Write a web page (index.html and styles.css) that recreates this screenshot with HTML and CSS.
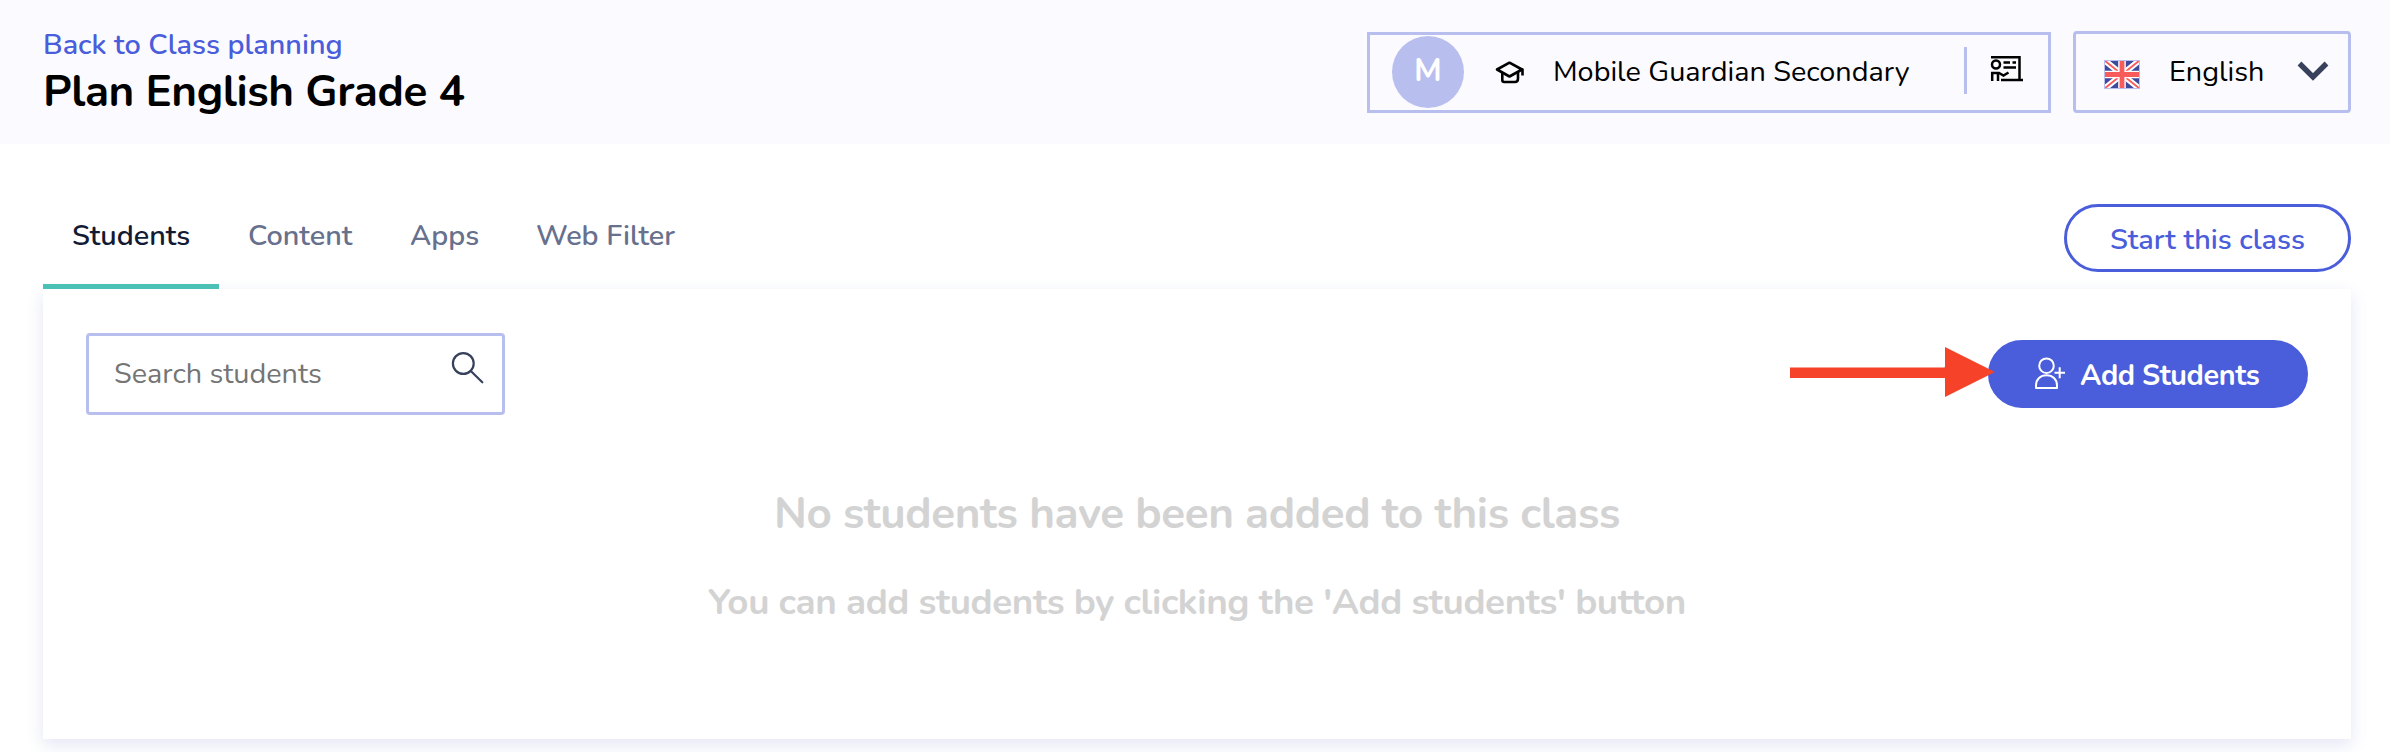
FILE: index.html
```
<!DOCTYPE html>
<html lang="en">
<head>
  <meta charset="UTF-8" />
  <meta name="viewport" content="width=device-width, initial-scale=1.0"/>
  <title>Plan English Grade 4</title>
  <link rel="stylesheet" href="styles.css">
</head>
<body>
  <header class="header">
    <div class="heading">
      <a class="back" href="#">Back to Class planning</a>
      <h1>Plan English Grade 4</h1>
    </div>

    <div class="school">
      <span class="avatar">M</span>
      <svg class="icon-cap" viewBox="0 0 30 24" fill="none" stroke="#000" stroke-width="2.6" stroke-linejoin="round">
        <path d="M2 9.5 L14.5 2.7 L27 9.5 L14.5 16.5 Z"/>
        <path d="M7.3 12.5 V20 Q7.3 22 9.3 22 H20 Q23 22 23 18.5 V12"/>
        <path d="M24 9.5 H27.5 V15.5"/>
      </svg>
      <span class="school-name">Mobile Guardian Secondary</span>
      <span class="divider"></span>
      <svg class="icon-teacher" viewBox="0 0 34 28" fill="none" stroke="#000" stroke-width="2.5">
        <path d="M1 2.3 H29.5 V25"/>
        <path d="M11 25 H33"/>
        <circle cx="6" cy="9.5" r="4"/>
        <path d="M2.2 26 V18 H9 L13.5 20.5 L18.5 17.5"/>
        <path d="M8 18 V26"/>
        <path d="M13.5 7.5 H20 M22.5 7.5 H26 M13.5 12.5 H26"/>
      </svg>
    </div>

    <div class="language">
      <svg class="flag" viewBox="0 0 36 29">
        <rect width="36" height="29" fill="#3e4a9b"/>
        <path d="M0 0 L36 29 M36 0 L0 29" stroke="#fff" stroke-width="6"/>
        <path d="M0 0 L36 29 M36 0 L0 29" stroke="#f95b5b" stroke-width="1.8"/>
        <path d="M18 0 V29 M0 14.5 H36" stroke="#fff" stroke-width="7.6"/>
        <path d="M18 0 V29 M0 14.5 H36" stroke="#f95b5b" stroke-width="4.8"/>
        <rect x=".5" y=".5" width="35" height="28" fill="none" stroke="#b8bfef"/>
      </svg>
      <span class="language-name">English</span>
      <svg class="chevron" viewBox="0 0 32 20" fill="none" stroke="#37415c" stroke-width="5.4">
        <path d="M2.5 2.5 L16 16 L29.5 2.5"/>
      </svg>
    </div>
  </header>

  <main>
    <div class="toolbar">
      <nav class="tabs">
        <a class="tab active" href="#">Students</a>
        <a class="tab content" href="#">Content</a>
        <a class="tab apps" href="#">Apps</a>
        <a class="tab filter" href="#">Web Filter</a>
      </nav>
      <button class="btn btn-outline"><span>Start this class</span></button>
    </div>

    <section class="card">
      <div class="card-top">
        <div class="search">
          <input type="text" placeholder="Search students" />
          <svg class="icon-search" viewBox="0 0 34 34" fill="none" stroke="#37415c" stroke-width="2.2" stroke-linecap="round">
            <circle cx="12.3" cy="12.5" r="10.4"/>
            <path d="M19.8 20 L31.3 31.3"/>
          </svg>
        </div>
        <div class="add">
          <svg class="arrow" viewBox="0 0 206 52">
            <circle cx="162" cy="26.5" r="9" fill="#37415c"/>
            <path d="M0 21.5 H155 V1 L205 26 L155 51 V32 H0 Z" fill="#f54228"/>
          </svg>
          <button class="btn btn-primary">
            <svg class="icon-user" viewBox="0 0 30 33" fill="none" stroke="#fff" stroke-width="2" stroke-linejoin="round">
              <circle cx="11.5" cy="8.7" r="7.3"/>
              <path d="M1 31 V28.5 C1 22 5.5 18.3 11.5 18.3 C17.5 18.3 22 22 22 28.5 V31 Z"/>
              <path d="M19.5 15.8 H30 M24.7 10.3 V21.3"/>
            </svg>
            <span>Add Students</span>
          </button>
        </div>
      </div>
      <div class="empty">
        <h2>No students have been added to this class</h2>
        <h3>You can add students by clicking the 'Add students' button</h3>
      </div>
    </section>
  </main>
</body>
</html>
```

FILE: styles.css
```
* {
  box-sizing: border-box;
}

body {
  margin: 0;
  min-height: 752px;
  background: #fff;
  font-family: Nunito, Lato, "Open Sans", sans-serif;
  font-size: 28.8px;
  line-height: 40px;
  color: #000;
}

a {
  text-decoration: none;
}

svg {
  display: block;
  flex: none;
}

h1, h2, h3 {
  margin: 0;
  font-weight: 700;
  letter-spacing: -0.4px;
}

.header {
  display: flex;
  align-items: flex-start;
  height: 144px;
  padding: 0 39px 0 43px;
  background: #fbfaff;
}

.heading {
  flex: 1;
  padding-top: 25px;
  white-space: nowrap;
}

.back {
  display: block;
  color: #4a5dda;
  font-weight: 600;
}

h1 {
  font-size: 44px;
  line-height: 55px;
}

.school {
  display: flex;
  align-items: center;
  width: 684px;
  height: 81px;
  margin-top: 32px;
  padding-left: 22px;
  border: 3px solid #b8bfef;
  white-space: nowrap;
}

.avatar {
  width: 72px;
  height: 72px;
  margin-bottom: 1px;
  border-radius: 50%;
  background: #b8bfef;
  color: #fff;
  font-size: 32px;
  font-weight: 700;
  line-height: 70px;
  text-align: center;
}

.icon-cap {
  width: 30px;
  height: 24px;
  margin: 0 0 2px 31px;
}

.school-name {
  width: 386px;
  margin: 0 0 2px 28px;
}

.divider {
  width: 3px;
  height: 47px;
  margin: 0 23px 4px auto;
  background: #b8bfef;
}

.icon-teacher {
  width: 34px;
  height: 28px;
  margin: 0 24px 8px 0;
}

.language {
  display: flex;
  align-items: center;
  width: 278px;
  height: 82px;
  margin: 31px 0 0 22px;
  padding: 0 19px 0 28px;
  border: 3px solid #b8bfef;
  border-radius: 4px;
}

.flag {
  width: 36px;
  height: 29px;
  margin-top: 5px;
}

.language-name {
  margin: 0 0 1px 29px;
}

.chevron {
  width: 32px;
  height: 20px;
  margin: 0 0 2px auto;
}

main {
  padding: 0 39px 0 43px;
}

.toolbar {
  display: flex;
  justify-content: space-between;
  align-items: flex-end;
  height: 145px;
}

.tabs {
  display: flex;
}

.tab {
  height: 74px;
  padding: 1px 29px 0;
  border-bottom: 5px solid transparent;
  color: #67708c;
  font-weight: 600;
  white-space: nowrap;
}

.tab.active {
  width: 176px;
  color: #131a33;
  border-color: #4bc0b5;
}

.content {
  width: 162px;
}

.apps {
  width: 126px;
}

.btn {
  display: flex;
  align-items: center;
  height: 68px;
  border: 3px solid #4a5dda;
  border-radius: 34px;
  font: inherit;
  font-weight: 600;
  white-space: nowrap;
  cursor: pointer;
}

.btn span {
  padding-top: 3px;
}

.btn-outline {
  justify-content: center;
  width: 287px;
  margin-bottom: 17px;
  background: #fff;
  color: #4a5dda;
}

.card {
  height: 450px;
  padding: 44px 43px 0;
  background: #fff;
  box-shadow: 0 6px 16px rgba(90, 100, 190, 0.16);
}

.card-top {
  display: flex;
  justify-content: space-between;
}

.search {
  display: flex;
  width: 419px;
  height: 82px;
  padding: 0 17px 0 25px;
  border: 3px solid #b8bfef;
  border-radius: 4px;
}

.search input {
  flex: 1;
  min-width: 0;
  padding: 0;
  border: none;
  outline: none;
  background: none;
  font: inherit;
}

.search input::placeholder {
  color: #757575;
}

.icon-search {
  width: 34px;
  height: 34px;
  margin-top: 15px;
}

.add {
  display: flex;
  height: 68px;
  margin-top: 7px;
}

.arrow {
  position: relative;
  z-index: 1;
  width: 206px;
  height: 52px;
  margin: 6px -8px 0 0;
}

.btn-primary {
  width: 320px;
  padding: 0 0 0 44px;
  background: #4a5dda;
  color: #fff;
  font-weight: 700;
  letter-spacing: -0.4px;
}

.icon-user {
  width: 30px;
  height: 33px;
  margin: 0 15px 1px 0;
}

.empty {
  padding-top: 71px;
  color: #d3d3d3;
  text-align: center;
  white-space: nowrap;
}

h2 {
  font-size: 44px;
  line-height: 56px;
}

h3 {
  margin-top: 36px;
  font-size: 36.8px;
  line-height: 48px;
}
```
